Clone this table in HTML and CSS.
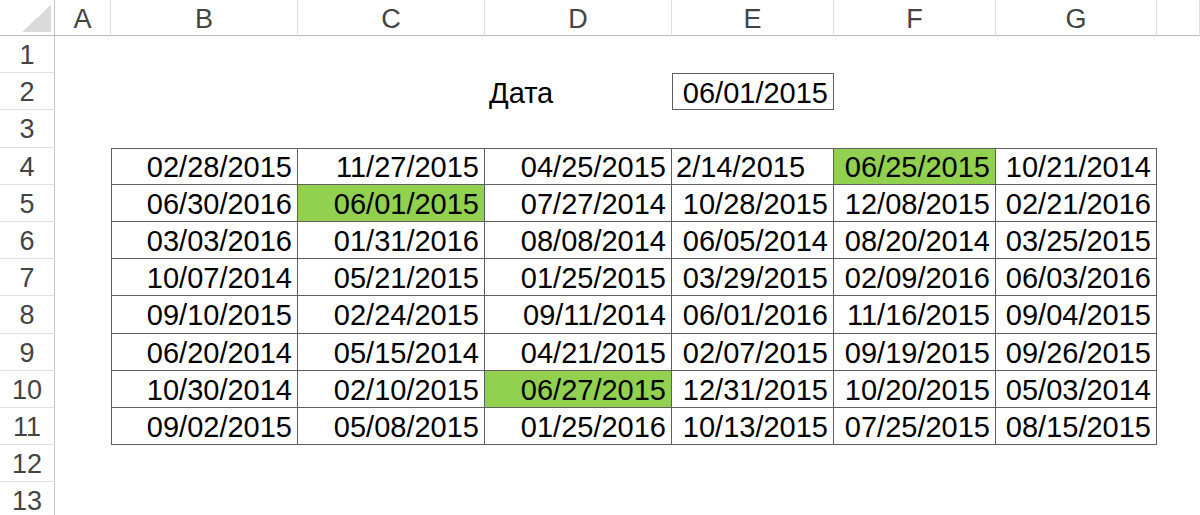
FILE: index.html
```html
<!DOCTYPE html>
<html>
<head>
  <meta charset="utf-8">
  <title>Лист1</title>
  <link rel="stylesheet" href="styles.css">
</head>
<body>

  <div class="sheet">
    <!-- заголовки столбцов -->
    <div class="corner"><span class="tri"></span></div>
    <div class="ch">A</div><div class="ch">B</div><div class="ch">C</div><div class="ch">D</div>
    <div class="ch">E</div><div class="ch">F</div><div class="ch">G</div><div class="ch"></div>

    <div class="rh">1</div>
    <div class="c"></div><div class="c"></div><div class="c"></div><div class="c"></div><div class="c"></div><div class="c"></div><div class="c"></div><div class="c"></div>

    <div class="rh">2</div>
    <div class="c"></div><div class="c"></div><div class="c"></div>
    <div class="c left">Дата</div>
    <div class="c box">06/01/2015</div>
    <div class="c"></div><div class="c"></div><div class="c"></div>

    <div class="rh">3</div>
    <div class="c"></div><div class="c"></div><div class="c"></div><div class="c"></div><div class="c"></div><div class="c"></div><div class="c"></div><div class="c"></div>

    <div class="rh">4</div>
    <div class="c"></div>
    <div class="c t tl tt">02/28/2015</div>
    <div class="c t tt">11/27/2015</div>
    <div class="c t tt">04/25/2015</div>
    <div class="c t tt left">2/14/2015</div>
    <div class="c t tt hit">06/25/2015</div>
    <div class="c t tt">10/21/2014</div>
    <div class="c"></div>

    <div class="rh">5</div>
    <div class="c"></div>
    <div class="c t tl">06/30/2016</div>
    <div class="c t hit">06/01/2015</div>
    <div class="c t">07/27/2014</div>
    <div class="c t">10/28/2015</div>
    <div class="c t">12/08/2015</div>
    <div class="c t">02/21/2016</div>
    <div class="c"></div>

    <div class="rh">6</div>
    <div class="c"></div>
    <div class="c t tl">03/03/2016</div>
    <div class="c t">01/31/2016</div>
    <div class="c t">08/08/2014</div>
    <div class="c t">06/05/2014</div>
    <div class="c t">08/20/2014</div>
    <div class="c t">03/25/2015</div>
    <div class="c"></div>

    <div class="rh">7</div>
    <div class="c"></div>
    <div class="c t tl">10/07/2014</div>
    <div class="c t">05/21/2015</div>
    <div class="c t">01/25/2015</div>
    <div class="c t">03/29/2015</div>
    <div class="c t">02/09/2016</div>
    <div class="c t">06/03/2016</div>
    <div class="c"></div>

    <div class="rh">8</div>
    <div class="c"></div>
    <div class="c t tl">09/10/2015</div>
    <div class="c t">02/24/2015</div>
    <div class="c t">09/11/2014</div>
    <div class="c t">06/01/2016</div>
    <div class="c t">11/16/2015</div>
    <div class="c t">09/04/2015</div>
    <div class="c"></div>

    <div class="rh">9</div>
    <div class="c"></div>
    <div class="c t tl">06/20/2014</div>
    <div class="c t">05/15/2014</div>
    <div class="c t">04/21/2015</div>
    <div class="c t">02/07/2015</div>
    <div class="c t">09/19/2015</div>
    <div class="c t">09/26/2015</div>
    <div class="c"></div>

    <div class="rh">10</div>
    <div class="c"></div>
    <div class="c t tl">10/30/2014</div>
    <div class="c t">02/10/2015</div>
    <div class="c t hit">06/27/2015</div>
    <div class="c t">12/31/2015</div>
    <div class="c t">10/20/2015</div>
    <div class="c t">05/03/2014</div>
    <div class="c"></div>

    <div class="rh">11</div>
    <div class="c"></div>
    <div class="c t tl">09/02/2015</div>
    <div class="c t">05/08/2015</div>
    <div class="c t">01/25/2016</div>
    <div class="c t">10/13/2015</div>
    <div class="c t">07/25/2015</div>
    <div class="c t">08/15/2015</div>
    <div class="c"></div>

    <div class="rh">12</div>
    <div class="c"></div><div class="c"></div><div class="c"></div><div class="c"></div><div class="c"></div><div class="c"></div><div class="c"></div><div class="c"></div>

    <div class="rh">13</div>
    <div class="c"></div><div class="c"></div><div class="c"></div><div class="c"></div><div class="c"></div><div class="c"></div><div class="c"></div><div class="c"></div>
  </div>

</body>
</html>
```

FILE: styles.css
```css
body {
  margin: 0;
  font-family: "Liberation Sans", Arial, sans-serif;
  background: #fff;
  overflow: hidden;
}

.sheet {
  display: grid;
  grid-template-columns: 55px 56px 187px 187px 187px 162px 162px 161px 1fr;
  grid-template-rows: 36px repeat(13, 37.2px);
  width: 1200px;
}

/* cabeçalhos */
.corner {
  display: flex;
  justify-content: flex-end;
  align-items: flex-end;
  padding: 0 3px 3px 0;
  border-right: 1px solid #c6c6c6;
  border-bottom: 1px solid #b8b8b8;
  box-sizing: border-box;
}

.tri {
  width: 29px;
  height: 27px;
  background: linear-gradient(to bottom right, transparent 50%, #dadada 50%);
}

.ch {
  display: flex;
  justify-content: center;
  align-items: center;
  padding-top: 3px;
  font-size: 27px;
  color: #444;
  border-right: 1px solid #e0e0e0;
  border-bottom: 1px solid #b8b8b8;
  box-sizing: border-box;
}

.rh {
  display: flex;
  justify-content: center;
  align-items: center;
  padding-top: 3px;
  font-size: 27px;
  color: #444;
  border-right: 1px solid #c6c6c6;
  border-bottom: 1px solid #e2e2e2;
  box-sizing: border-box;
}

/* células */
.c {
  display: flex;
  justify-content: flex-end;
  align-items: center;
  padding: 3px 5px 0 4px;
  font-size: 29px;
  color: #000;
  white-space: nowrap;
  box-sizing: border-box;
}

.c.left {
  justify-content: flex-start;
}

.t {
  border-right: 1px solid #5e5e5e;
  border-bottom: 1px solid #5e5e5e;
}

.tl {
  border-left: 1px solid #5e5e5e;
}

.tt {
  border-top: 1px solid #5e5e5e;
}

.box {
  border: 1px solid #5e5e5e;
}

.hit {
  background: #92d050;
}
```
